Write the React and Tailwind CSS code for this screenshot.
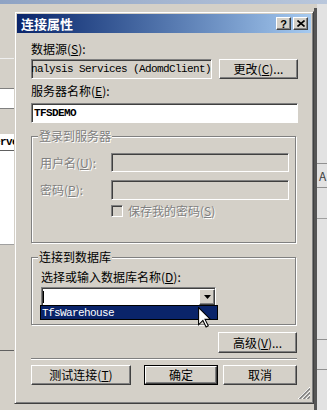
import React from 'react';

// Windows 经典风格的"连接属性"对话框
const cjk = "font-['Noto_Sans_CJK_SC','Noto_Sans',sans-serif]";
const mono = "font-['Liberation_Mono',monospace]";

const raised = 'border border-t-white border-l-white border-r-[#404040] border-b-[#404040] shadow-[inset_-1px_-1px_0_#808080] bg-[#d4d0c8]';
const sunken = 'border border-t-[#808080] border-l-[#808080] border-r-white border-b-white shadow-[inset_1px_1px_0_#404040]';
const etched = 'border border-[#808080] shadow-[1px_1px_0_#fff,inset_1px_1px_0_#fff]';
const dim = 'text-[#808080] [text-shadow:1px_1px_0_#fff]';

function Btn({ className = '', children }) {
  return (
    <div className={`${raised} flex items-center justify-center text-[12px] leading-[16px] text-black ${className}`}>
      {children}
    </div>
  );
}

function Group({ label, labelClass = '', className = '', children }) {
  return (
    <div className={`relative ${etched} ${className}`}>
      <span className={`absolute left-[6px] top-[-9px] px-[1px] bg-[#d4d0c8] text-[12px] leading-[16px] ${labelClass}`}>{label}</span>
      {children}
    </div>
  );
}

function Cursor() {
  return (
    <svg width="13" height="21" viewBox="0 0 12 19.5" className="absolute left-[156px] top-[19px]">
      <path d="M0.5 0.5 L0.5 16.5 L4.5 12.5 L7.5 18.5 L9.5 17.5 L6.5 11.5 L11.5 11.5 Z" fill="#fff" stroke="#000" strokeWidth="1" strokeLinejoin="miter" />
    </svg>
  );
}

function Grip() {
  return (
    <svg width="12" height="12" viewBox="0 0 12 12">
      {[0, 4, 8].map(o => (
        <g key={o}>
          <line x1={12} y1={o} x2={o} y2={12} stroke="#fff" strokeWidth="1" />
          <line x1={12} y1={o + 1.5} x2={o + 1.5} y2={12} stroke="#808080" strokeWidth="1.5" />
        </g>
      ))}
    </svg>
  );
}

export default function App() {
  return (
    <div className={`relative w-[327px] h-[410px] overflow-hidden bg-[#d4d0c8] flex flex-col ${cjk}`}>
      {/* 背景窗口 */}
      <div className="h-[4px] bg-gradient-to-r from-[#8fa3c4] to-[#b9c7dc]" />
      <div className="flex-1 flex">
        <div className="w-[14px] flex flex-col overflow-hidden">
          <div className="h-[54px]" />
          <div className="h-px bg-[#efefef]" />
          <div className="h-[29px]" />
          <div className="h-px bg-[#808080]" />
          <div className="h-[19px] bg-white" />
          <div className="h-px bg-[#808080]" />
          <div className="h-[25px]" />
          <div className="h-[16px] bg-white flex items-center">
            <span className={`${mono} text-[11px] tracking-[-0.6px] font-bold ml-[-12px] whitespace-nowrap`}>Server</span>
          </div>
          <div className="h-px bg-[#606060]" />
          <div className="h-[93px] bg-white" />
          <div className="h-px bg-[#a0a0a0]" />
          <div className="h-[105px]" />
          <div className="h-px bg-[#606060]" />
          <div className="flex-1" />
        </div>
        <div className="flex-1" />
        <div className="w-[13px] flex">
          <div className="w-[3px] bg-[#555] mt-[4px]" />
          <div className="flex-1 bg-[#e2e2e2] flex flex-col">
            <div className="h-[159px]" />
            <div className="h-px bg-[#909090]" />
            <div className="h-[23px] flex items-center text-[12px] text-[#404040] pl-[2px]">A</div>
            <div className="h-px bg-[#909090]" />
            <div className="h-[30px]" />
            <div className="h-px bg-[#a0a0a0]" />
            <div className="h-[120px]" />
            <div className="h-px bg-[#909090]" />
            <div className="h-[29px]" />
            <div className="h-px bg-[#909090]" />
          </div>
        </div>
      </div>

      {/* 对话框 */}
      <div className="absolute left-[14px] top-[11px] w-[300px] h-[393px] border border-t-[#d4d0c8] border-l-[#d4d0c8] border-r-[#404040] border-b-[#404040] shadow-[inset_1px_1px_0_#fff,inset_-1px_-1px_0_#808080] bg-[#d4d0c8] p-[2px] flex flex-col">
        <div className="h-[19px] bg-gradient-to-r from-[#0a246a] to-[#a6caf0] flex items-center justify-between pl-[4px] pr-[3px]">
          <span className="text-white font-bold text-[13px] leading-[16px]">连接属性</span>
          <div className="flex gap-[2px]">
            <Btn className="w-[15px] h-[13px] !text-[11px] font-bold font-['Liberation_Sans',sans-serif]">?</Btn>
            <Btn className="w-[15px] h-[13px]">
              <svg width="8" height="7" viewBox="0 0 8 7">
                <path d="M0.5 0.5 L7.5 6.5 M7.5 0.5 L0.5 6.5" stroke="#000" strokeWidth="1.6" />
              </svg>
            </Btn>
          </div>
        </div>

        <div className="flex-1 flex flex-col pl-[14px] pr-[13px] text-[12px] leading-[16px] text-black">
          <div className="mt-[8px] h-[16px]">数据源(<u>S</u>):</div>
          <div className="mt-[2px] flex gap-[7px]">
            <div className={`${sunken} bg-[#d4d0c8] w-[181px] h-[20px] overflow-hidden flex items-center justify-end`}>
              <span className={`${mono} text-[11px] tracking-[-0.6px] whitespace-nowrap shrink-0`}>Analysis Services (AdomdClient)</span>
            </div>
            <Btn className="w-[79px] h-[20px]">更改(<u>C</u>)...</Btn>
          </div>
          <div className="mt-[4px] h-[16px]">服务器名称(<u>E</u>):</div>
          <div className={`mt-[4px] ${sunken} bg-white h-[20px] flex items-center pl-[2px]`}>
            <span className={`${mono} text-[11px] tracking-[-0.6px] font-bold`}>TFSDEMO</span>
          </div>

          <Group label="登录到服务器" labelClass={dim} className="mt-[13px] w-[265px] h-[107px] flex flex-col pl-[8px] pt-[16px]">
            <div className="flex items-center h-[19px]">
              <span className={`w-[71px] ${dim}`}>用户名(<u>U</u>):</span>
              <div className={`${sunken} bg-[#d4d0c8] w-[178px] h-[19px]`} />
            </div>
            <div className="flex items-center h-[20px] mt-[8px]">
              <span className={`w-[71px] ${dim}`}>密码(<u>P</u>):</span>
              <div className={`${sunken} bg-[#d4d0c8] w-[178px] h-[20px]`} />
            </div>
            <div className="flex items-center h-[12px] mt-[5px] pl-[71px] gap-[5px]">
              <div className={`${sunken} bg-[#d4d0c8] w-[12px] h-[12px]`} />
              <span className={dim}>保存我的密码(<u>S</u>)</span>
            </div>
          </Group>

          <Group label="连接到数据库" className="mt-[14px] w-[265px] h-[68px] flex flex-col pl-[9px] pt-[11px]">
            <div className="h-[16px]">选择或输入数据库名称(<u>D</u>):</div>
            <div className={`relative mt-[2px] ${sunken} bg-white w-[175px] h-[20px] flex items-center justify-between`}>
              <div className="w-px h-[12px] bg-black ml-[1px]" />
              <div className={`${raised} w-[16px] h-[16px] flex items-center justify-center`}>
                <svg width="7" height="4" viewBox="0 0 7 4">
                  <path d="M0 0 L7 0 L3.5 4 Z" fill="#000" />
                </svg>
              </div>
              <div className="absolute left-[-2px] top-[17px] w-[178px] h-[15px] bg-[#0a246a] border border-black flex items-center pl-[1px]">
                <span className={`${mono} text-[11px] tracking-[-0.6px] text-white`}>TfsWarehouse</span>
              </div>
              <Cursor />
            </div>
          </Group>

          <Btn className="mt-[7px] self-end mr-[1px] w-[79px] h-[21px]">高级(<u>V</u>)...</Btn>

          <div className="mt-[5px] w-[266px] h-[2px] border-t border-[#808080] border-b border-b-white" />

          <div className="mt-[5px] flex items-center h-[20px]">
            <Btn className="w-[100px] h-[20px]">测试连接(<u>T</u>)</Btn>
            <div className="ml-[13px] border border-black w-[74px] h-[20px]">
              <Btn className="w-full h-full">确定</Btn>
            </div>
            <Btn className="ml-[5px] w-[74px] h-[20px]">取消</Btn>
          </div>

          <div className="mt-[2px] flex justify-end mr-[-12px]">
            <Grip />
          </div>
        </div>
      </div>
    </div>
  );
}
